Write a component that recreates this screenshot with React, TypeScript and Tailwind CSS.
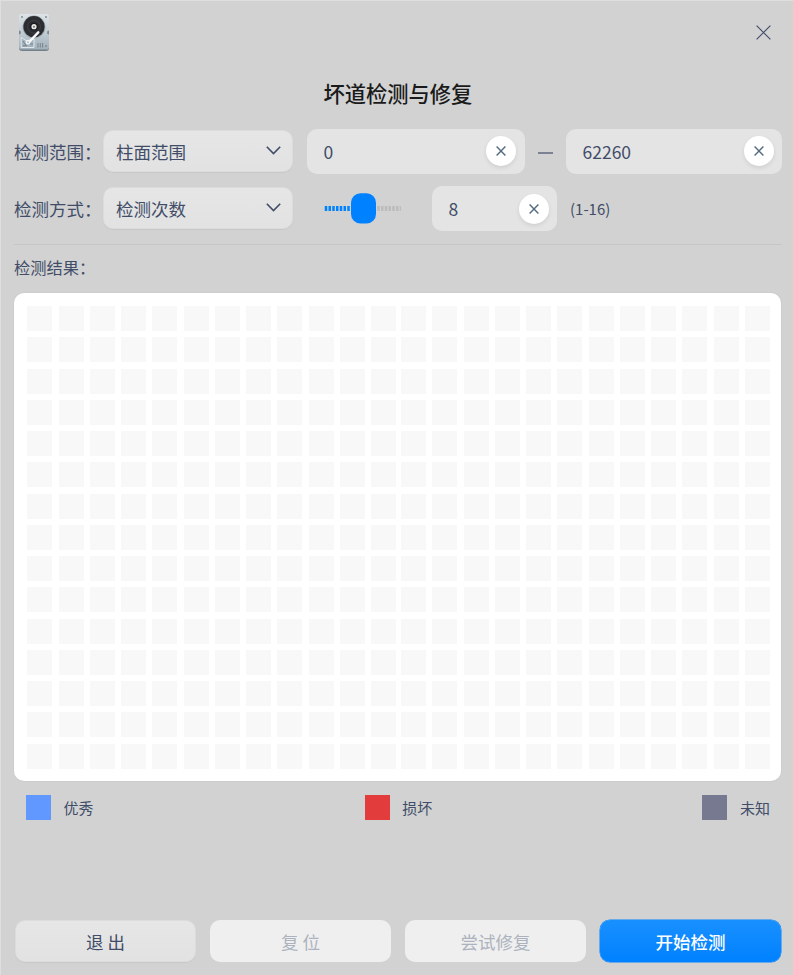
import React from "react";

function Cross({ size, stroke, width }: { size: number; stroke: string; width: number }) {
  return (
    <svg width={size} height={size} viewBox={`0 0 ${size} ${size}`} stroke={stroke} strokeWidth={width} fill="none" className="shrink-0">
      <path d={`M.6 .6L${size - 0.6} ${size - 0.6}M${size - 0.6} .6L.6 ${size - 0.6}`} />
    </svg>
  );
}

function DiskIcon() {
  return (
    <svg width="32" height="40" viewBox="0 0 32 40" className="shrink-0">
      <defs>
        <linearGradient id="metal" x1="0" y1="0" x2="0" y2="1">
          <stop offset="0" stopColor="#dde3e6" />
          <stop offset="0.5" stopColor="#c2cdd4" />
          <stop offset="1" stopColor="#a3b0b9" />
        </linearGradient>
      </defs>
      <rect x="1" y="3" width="30" height="35" rx="3" fill="#71808a" />
      <rect x="1" y="1" width="30" height="35.5" rx="2.6" fill="url(#metal)" />
      <circle cx="4" cy="4" r="1" fill="#818e96" />
      <circle cx="28" cy="4" r="1" fill="#818e96" />
      <path d="M1 17.5a2 2 0 0 1 0 4zM31 17.5a2 2 0 0 0 0 4z" fill="#7c8a93" />
      <circle cx="16" cy="14" r="11.4" fill="#9aa6ad" />
      <circle cx="16" cy="13.7" r="10.6" fill="#2b2d31" />
      <circle cx="16" cy="13.7" r="6.5" fill="none" stroke="#3d3f45" strokeWidth="1" />
      <circle cx="16" cy="13.7" r="3.7" fill="#15171a" />
      <circle cx="16" cy="13.7" r="2.6" fill="#e6e6e4" />
      <circle cx="16" cy="13.7" r="1" fill="#77736d" />
      <path d="M3.2 24.5l5.5 3.5 7.3-2v8.5H3.2z" fill="#a3b2bc" stroke="#edf3f6" strokeWidth=".8" />
      <path d="M5 28l3 4.5M5 32.8h4M12 31h3" stroke="#748490" strokeWidth="1" />
      <path d="M20.3 19.3l-8.6 9" stroke="#f6f8f9" strokeWidth="2.4" strokeLinecap="round" />
      <circle cx="10" cy="29.2" r="2.4" fill="#eef2f4" />
      <circle cx="10" cy="29.2" r=".8" fill="#8c9ba4" />
      <path d="M20 30v4.5M22.3 30v4.5M24.6 30v4.5" stroke="#76858e" strokeWidth="1" />
      <circle cx="28" cy="33" r="1" fill="#818e96" />
    </svg>
  );
}

function Select({ text }: { text: string }) {
  return (
    <div className="flex h-[42px] w-[190px] shrink-0 items-center justify-between rounded-[10px] border border-[#dcdcdc] bg-linear-to-b from-[#e6e6e6] to-[#e2e2e2] pl-[12px] pr-[11px] shadow-[0_1px_1px_rgba(0,0,0,0.05)]">
      <span className="mt-px leading-[26px]">{text}</span>
      <svg width="15" height="9" viewBox="0 0 15 9" fill="none" stroke="#414d68" strokeWidth="1.6" className="mb-[2px]">
        <path d="M.8 .8L7.5 7.5L14.2 .8" />
      </svg>
    </div>
  );
}

function ClearButton() {
  return (
    <button className="flex size-[30px] items-center justify-center rounded-full bg-white shadow-[0_2px_4px_rgba(0,0,0,0.09)]">
      <Cross size={10} stroke="#526a7f" width={1.4} />
    </button>
  );
}

function Slider() {
  const ticks = Array.from({ length: 21 }, (_, i) => i);
  return (
    <svg width="78" height="31" viewBox="0 0 78 31" className="shrink-0">
      {ticks.map((i) => (
        <rect key={i} x={0.75 + i * 3.75} y="13" width={i === 20 ? 1.2 : 2.5} height="5" fill={i < 8 ? "#0081ff" : "#bcbcbc"} />
      ))}
      <rect x="27" y="0.3" width="25" height="30.2" rx="9.5" fill="#0081ff" />
    </svg>
  );
}

function Half() {
  return (
    <div className="grid grid-cols-[repeat(12,25px)] auto-rows-[25px] gap-[6.25px]">
      {Array.from({ length: 180 }, (_, i) => (
        <div key={i} className="bg-[#f8f8f8]" />
      ))}
    </div>
  );
}

function Legend({ color, text }: { color: string; text: string }) {
  return (
    <div className="flex h-[25px] items-center gap-[12.5px] text-[15px]">
      <div className={`size-[25px] ${color}`} />
      <span className="leading-[25px]">{text}</span>
    </div>
  );
}

export default function App() {
  return (
    <div className="flex h-[975px] w-[793px] flex-col overflow-hidden border-l border-t border-[#dedede] bg-[#d2d2d2] pl-[13px] pr-[11px] font-['Noto_Sans_CJK_SC',sans-serif] text-[17.5px] text-[#414d68]">
      <header className="flex h-[62px] items-start justify-between pl-[4px] pr-[11px] pt-[12px]">
        <DiskIcon />
        <button className="mt-[12px]">
          <Cross size={15} stroke="#414d68" width={1.2} />
        </button>
      </header>

      <h1 className="mt-[14px] h-[32px] text-center text-[21.25px] font-medium leading-[32px] text-[#1a1a1a]">坏道检测与修复</h1>

      <div className="mt-[19px] flex h-[46px] items-center">
        <span className="mt-[2px] w-[89px] shrink-0 leading-[26px]">检测范围：</span>
        <Select text="柱面范围" />
        <div className="ml-[14px] flex h-[45px] w-[218px] shrink-0 items-center justify-between rounded-[10px] bg-[#e4e4e4] pl-[16.5px] pr-[9px]">
          <span className="mt-[2px]">0</span>
          <ClearButton />
        </div>
        <span className="mx-[13px] mt-[4px] h-[2px] w-[15px] shrink-0 bg-[#7c8193]" />
        <div className="flex h-[45px] w-[216px] shrink-0 items-center justify-between rounded-[10px] bg-[#e4e4e4] pl-[16.5px] pr-[8px]">
          <span className="mt-[2px]">62260</span>
          <ClearButton />
        </div>
      </div>

      <div className="mt-[11px] flex h-[46px] items-center">
        <span className="mt-[2px] w-[89px] shrink-0 leading-[26px]">检测方式：</span>
        <Select text="检测次数" />
        <div className="ml-[31px]">
          <Slider />
        </div>
        <div className="ml-[30px] flex h-[45px] w-[125px] items-center justify-between rounded-[10px] bg-[#e4e4e4] pl-[16.5px] pr-[8px] pt-px">
          <span className="mt-px">8</span>
          <ClearButton />
        </div>
        <span className="ml-[13px] mt-[2px] text-[15px] leading-[24px]">(1-16)</span>
      </div>

      <hr className="mt-[13px] border-t border-[#c6c6c6]" />

      <div className="mt-[10px] h-[24px] text-[16.25px] leading-[24px]">检测结果：</div>

      <main className="mt-[14px] flex h-[488px] w-[767px] shrink-0 gap-[5px] rounded-[10px] bg-white pl-[13.25px] pt-[13px] shadow-[0_0_0_1px_rgba(0,0,0,0.02)]">
        <Half />
        <Half />
      </main>

      <div className="mt-[14px] flex justify-between pl-[12px] pr-[12px]">
        <Legend color="bg-[#6098ff]" text="优秀" />
        <Legend color="bg-[#e33c3c] ml-px" text="损坏" />
        <Legend color="bg-[#777990]" text="未知" />
      </div>

      <footer className="mt-[100px] flex gap-[14px] pl-[1px] leading-[26px]">
        <button className="h-[42px] w-[181px] rounded-[10px] border border-[#dcdcdc] bg-linear-to-b from-[#e6e6e6] to-[#e2e2e2] pt-px shadow-[0_1px_1px_rgba(0,0,0,0.05)]">退 出</button>
        <button className="h-[42px] w-[181px] rounded-[10px] bg-[#efefef] pt-[2px] text-[#adb3be]">复 位</button>
        <button className="h-[42px] w-[181px] rounded-[10px] bg-[#efefef] pt-[2px] text-[#adb3be]">尝试修复</button>
        <button className="h-[42px] w-[181px] rounded-[10px] bg-linear-to-b from-[#1890ff] to-[#0081ff] pt-[2px] font-medium text-white shadow-[0_0_0_0.5px_#0081ff]">开始检测</button>
      </footer>
    </div>
  );
}
